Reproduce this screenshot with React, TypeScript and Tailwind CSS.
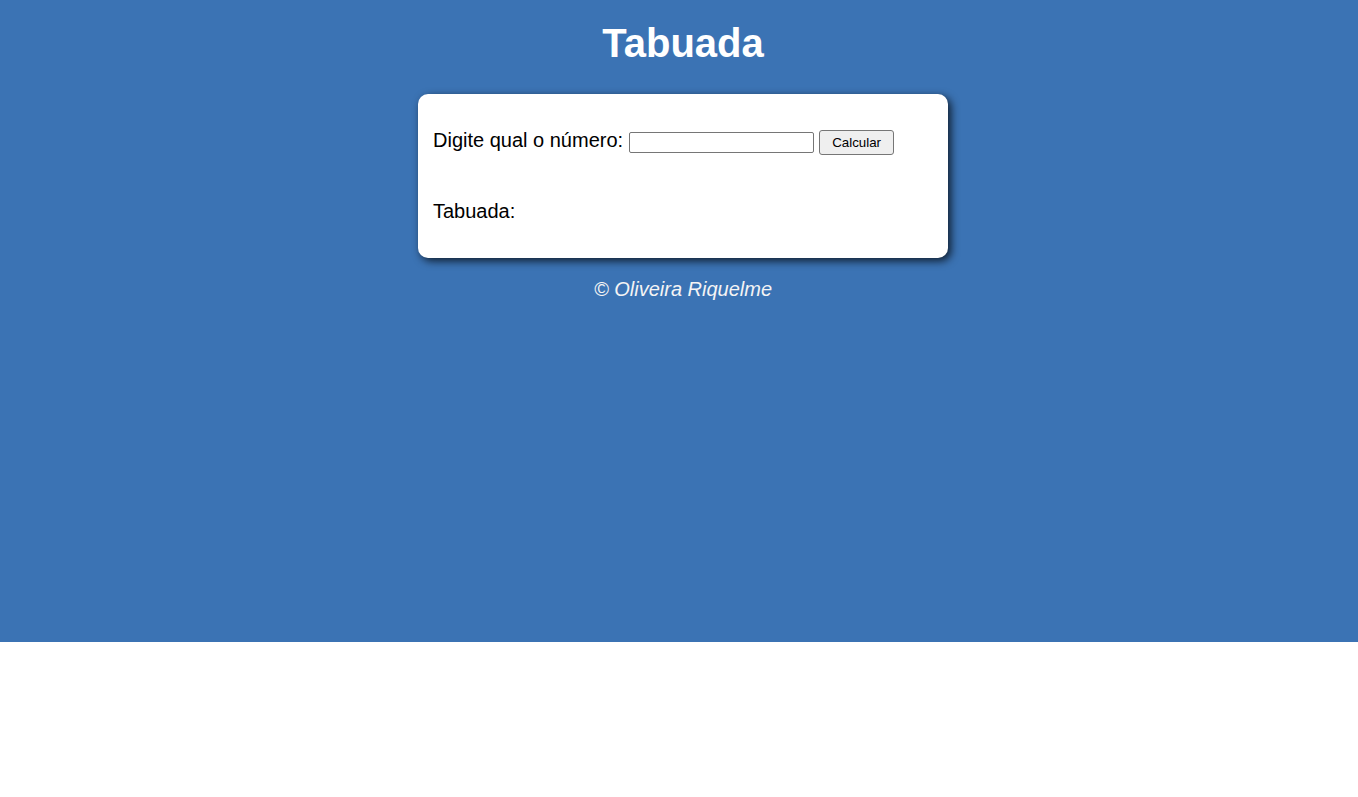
export default function App() {
  return (
    <div className="w-full min-h-[797px] bg-white" style={{ fontFamily: '"Liberation Sans", Arial, sans-serif' }}>
      <div className="h-[642px] bg-[#3b73b4] pl-[8px] flex flex-col items-center">
        <h1 className="mt-[20px] text-[40px] leading-[46px] font-bold text-white">Tabuada</h1>
        <div className="mt-[28px] w-[530px] h-[164px] bg-white rounded-[10px] shadow-[3px_3px_8px_rgba(0,0,0,0.75)] px-[15px] pt-[35px] text-black">
          <div className="flex items-start">
            <span className="text-[20px] leading-[23px]">Digite qual o número:</span>
            <input
              type="text"
              className="ml-[6px] mt-[3px] w-[185px] h-[21px] border border-[#767676] rounded-[2px] bg-white px-1 text-[13px]"
            />
            <button className="ml-[5px] mt-[1px] w-[75px] h-[25px] border border-[#767676] rounded-[3px] bg-[#efefef] text-[13.33px] leading-none text-black">
              Calcular
            </button>
          </div>
          <div className="mt-[45px] text-[20px] leading-[23px]">Tabuada:</div>
        </div>
        <p className="mt-[20px] text-[20px] leading-[23px] italic text-[#f4f4f4]">© Oliveira Riquelme</p>
      </div>
    </div>
  );
}
